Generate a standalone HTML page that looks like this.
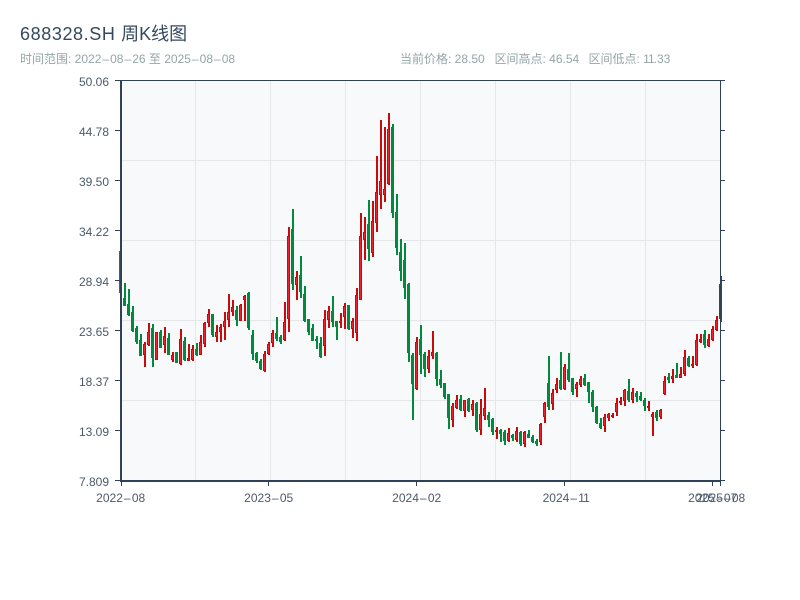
<!DOCTYPE html>
<html lang="zh">
<head>
<meta charset="utf-8">
<title>688328.SH 周K线图</title>
<style>
html,body{margin:0;padding:0;background:#fff;width:800px;height:600px;overflow:hidden}
svg{display:block}
text{font-family:"Liberation Sans","Noto Sans CJK SC",sans-serif}
.y{font-size:12px;fill:#4b5a6b;text-anchor:end}
.x{font-size:12px;fill:#4b5a6b;text-anchor:middle}
.s{font-size:12px;fill:#95a5a6}
.h{letter-spacing:1.3px}
.k{letter-spacing:1.05px}
</style>
</head>
<body>
<svg width="800" height="600" viewBox="0 0 800 600" xmlns="http://www.w3.org/2000/svg">
<text x="20" y="40" font-size="18" fill="#34495e"><tspan letter-spacing=".6">688328.SH </tspan>周K线图</text>
<text class="s" x="20" y="63">时间范围: 2022<tspan class="k" dx="1">–</tspan>08<tspan class="k" dx="1">–</tspan>26 至 2025<tspan class="k" dx="1">–</tspan>08<tspan class="k" dx="1">–</tspan>08</text>
<text class="s" x="400" y="63">当前价格: 28.50</text>
<text class="s" x="494.5" y="63">区间高点: 46.54</text>
<text class="s" x="588.5" y="63">区间低点: <tspan letter-spacing="-1">11</tspan>.33</text>

<g shape-rendering="crispEdges">
<rect x="120" y="80" width="600" height="400" fill="#f8f9fb"/>
<path d="M120 160.5H720M120 240.5H720M120 320.5H720M120 400.5H720M195.5 80V480M270.5 80V480M345.5 80V480M420.5 80V480M495.5 80V480M570.5 80V480M645.5 80V480" stroke="#e4e6ea" stroke-width="1" fill="none"/>

<path fill="none" stroke="#c70a0a" stroke-width="2" d="M145 342V367M149 323V346M157 332V360M165 327V353M173 352V362M181 329V365M189 344V361M193 345V361M201 335V355M205 322V347M209 309V327M217 325V342M221 324V342M225 312V340M229 294V327M233 300V316M241 304V321M245 295V321M265 351V372M269 342V355M273 330V347M285 302V341M289 227V332M297 271V300M325 310V356M329 306V328M341 313V328M345 303V329M353 318V338M357 288V341M361 213V300M365 217V260M373 201V257M377 156V232M381 120V209M385 127V202M389 113V185M417 337V390M429 350V373M433 331V359M453 403V427M457 395V409M465 400V417M473 400V416M481 399V435M485 388V420M497 427V439M509 428V442M517 427V442M525 431V447M541 423V445M545 402V423M553 389V410M557 378V393M565 364V390M577 382V397M581 376V387M605 414V432M609 413V421M613 413V418M617 398V416M621 397V405M625 389V406M633 388V403M649 401V411M653 412V436M661 409V419M665 376V395M673 369V383M681 367V378M685 350V376M693 356V368M697 334V366M701 334V343M709 334V347M713 326V341M717 316V331M721 276V322"/>
<path fill="none" stroke="#c70a0a" stroke-width="3" d="M144.5 344V355M148.5 332V345M156.5 332V360M164.5 336V345M172.5 355V360M180.5 339V364M188.5 358V361M192.5 349V360M200.5 342V355M204.5 323V344M208.5 314V323M216.5 332V337M220.5 327V332M224.5 321V327M228.5 312V320M232.5 307V312M240.5 305V321M244.5 296V300M264.5 354V371M268.5 344V354M272.5 333V343M284.5 322V340M288.5 236V319M296.5 277V285M324.5 319V346M328.5 311V320M340.5 321V323M344.5 306V317M352.5 321V329M356.5 295V333M360.5 236V300M364.5 232V240M372.5 221V253M376.5 192V223M380.5 181V195M384.5 189V195M388.5 129V184M416.5 342V389M428.5 356V369M432.5 352V356M452.5 406V420M456.5 400V408M464.5 400V411M472.5 404V410M480.5 414V430M484.5 408V416M496.5 430V432M508.5 433V441M516.5 431V440M524.5 432V444M540.5 424V442M544.5 403V417M552.5 393V404M556.5 384V390M564.5 367V389M576.5 384V389M580.5 379V385M604.5 417V426M608.5 414V418M612.5 415V417M616.5 403V412M620.5 401V403M624.5 390V401M632.5 392V400M648.5 406V408M652.5 414V417M660.5 410V417M664.5 381V394M672.5 376V379M680.5 374V378M684.5 357V374M692.5 364V366M696.5 340V365M700.5 339V342M708.5 339V346M712.5 329V340M716.5 320V330M720.5 284V319"/>
<path fill="none" stroke="#f0202c" stroke-width="1" d="M144.5 345V354M148.5 333V344M156.5 333V359M164.5 337V344M172.5 356V359M180.5 340V363M192.5 350V359M200.5 343V354M204.5 324V343M208.5 315V322M216.5 333V336M220.5 328V331M224.5 322V326M228.5 313V319M232.5 308V311M240.5 306V320M244.5 297V299M264.5 355V370M268.5 345V353M272.5 334V342M284.5 323V339M288.5 237V318M296.5 278V284M324.5 320V345M328.5 312V319M344.5 307V316M352.5 322V328M356.5 296V332M360.5 237V299M364.5 233V239M372.5 222V252M376.5 193V222M380.5 182V194M384.5 190V194M388.5 130V183M416.5 343V388M428.5 357V368M432.5 353V355M452.5 407V419M456.5 401V407M464.5 401V410M472.5 405V409M480.5 415V429M484.5 409V415M508.5 434V440M516.5 432V439M524.5 433V443M540.5 425V441M544.5 404V416M552.5 394V403M556.5 385V389M564.5 368V388M576.5 385V388M580.5 380V384M604.5 418V425M608.5 415V417M616.5 404V411M624.5 391V400M632.5 393V399M652.5 415V416M660.5 411V416M664.5 382V393M672.5 377V378M680.5 375V377M684.5 358V373M696.5 341V364M700.5 340V341M708.5 340V345M712.5 330V339M716.5 321V329M720.5 285V318"/>

<path fill="none" stroke="#008a3c" stroke-width="2" d="M121 251V293M125 283V306M129 289V316M133 306V332M137 326V344M141 334V356M153 324V367M161 330V348M169 333V355M177 352V363M185 337V361M197 343V356M213 314V337M237 306V326M249 292V330M253 330V360M257 352V363M261 359V370M277 317V341M281 335V344M293 209V290M301 256V298M305 286V322M309 319V335M313 324V341M317 336V349M321 337V358M333 296V327M337 321V340M349 305V330M369 200V261M393 124V218M397 194V255M401 239V281M405 243V299M409 283V362M413 353V420M421 325V374M425 352V377M437 352V386M441 370V388M445 383V399M449 394V429M461 395V411M469 398V412M477 402V432M489 412V427M493 418V435M501 429V442M505 430V445M513 434V441M521 431V446M529 430V438M533 435V443M537 439V446M549 356V410M561 352V390M569 353V382M573 378V395M585 374V386M589 382V403M593 390V412M597 406V424M601 418V429M629 379V402M637 391V402M641 392V401M645 398V411M657 410V421M669 373V383M677 363V378M689 356V367M705 330V348"/>
<path fill="none" stroke="#008a3c" stroke-width="3" d="M120.5 251V293M124.5 298V306M128.5 304V315M132.5 312V331M136.5 328V342M140.5 340V356M152.5 328V358M160.5 332V348M168.5 338V355M176.5 352V363M184.5 341V360M196.5 349V355M212.5 314V335M236.5 310V320M248.5 293V328M252.5 335V354M256.5 353V361M260.5 361V369M276.5 333V339M280.5 337V342M292.5 229V284M300.5 275V292M304.5 294V321M308.5 319V332M312.5 328V341M316.5 339V341M320.5 343V357M332.5 311V322M336.5 321V327M348.5 305V329M368.5 224V249M392.5 127V213M396.5 212V248M400.5 252V271M404.5 260V288M408.5 284V353M412.5 355V384M420.5 339V355M424.5 354V369M436.5 353V379M440.5 379V385M444.5 383V397M448.5 394V418M460.5 399V410M468.5 399V411M476.5 403V430M488.5 415V420M492.5 419V432M500.5 430V434M504.5 432V441M512.5 435V438M520.5 432V444M528.5 434V438M532.5 437V442M536.5 441V444M548.5 383V407M560.5 380V389M568.5 369V380M572.5 378V392M584.5 378V385M588.5 382V392M592.5 392V407M596.5 407V423M600.5 423V428M628.5 391V400M636.5 393V397M640.5 396V400M644.5 400V406M656.5 412V418M668.5 377V380M676.5 375V378M688.5 358V366M704.5 334V345"/>

<path fill="none" stroke="#2f4258" stroke-width="1" d="M120 80.5H720M720.5 80V482M115 80.5H120M115 130.5H120M115 180.5H120M115 230.5H120M115 280.5H120M115 330.5H120M115 380.5H120M115 430.5H120M115 480.5H120M720 80.5H725M720 130.5H725M720 180.5H725M720 230.5H725M720 280.5H725M720 330.5H725M720 380.5H725M720 430.5H725M720 480.5H725M121.5 482V486M268.5 482V486M416.5 482V486M564.5 482V486M712.5 482V486M720.5 482V486"/>
<path fill="none" stroke="#2f4258" stroke-width="2" d="M121 80V482M120 481H721"/>
</g>

<text class="y" x="109" y="86">50.06</text>
<text class="y" x="109" y="136">44.78</text>
<text class="y" x="109" y="186">39.50</text>
<text class="y" x="109" y="236">34.22</text>
<text class="y" x="109" y="286">28.94</text>
<text class="y" x="109" y="336">23.65</text>
<text class="y" x="109" y="386">18.37</text>
<text class="y" x="109" y="436">13.09</text>
<text class="y" x="109" y="486">7.809</text>

<text class="x" x="120.7" y="502">2022<tspan class="h" dx="1">–</tspan>08</text>
<text class="x" x="268.7" y="502">2023<tspan class="h" dx="1">–</tspan>05</text>
<text class="x" x="416.7" y="502">2024<tspan class="h" dx="1">–</tspan>02</text>
<text class="x" x="565.7" y="502">2024<tspan class="h" dx="1">–</tspan><tspan letter-spacing="-1">11</tspan></text>
<text class="x" x="712.7" y="502">2025<tspan class="h" dx="1">–</tspan>07</text>
<text class="x" x="720.7" y="502">2025<tspan class="h" dx="1">–</tspan>08</text>
</svg>
</body>
</html>
